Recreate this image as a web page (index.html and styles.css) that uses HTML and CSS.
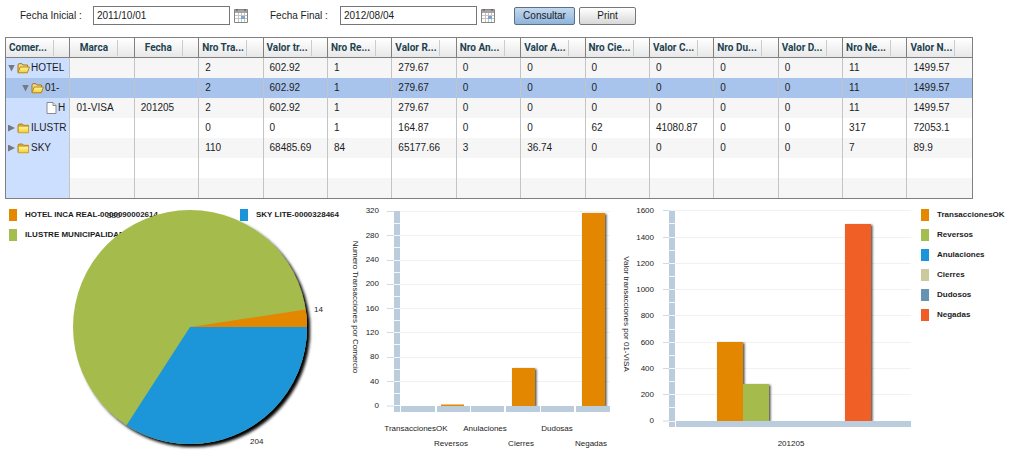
FILE: index.html
```html
<!DOCTYPE html>
<html lang="es">
<head>
<meta charset="utf-8">
<title>Transacciones por Comercio</title>
<link rel="stylesheet" href="styles.css">
</head>
<body>
<svg class="defs" width="0" height="0" aria-hidden="true">
  <defs>
    <linearGradient id="gold" x1="0" y1="0" x2="0" y2="1"><stop offset="0" stop-color="#fff6a0"/><stop offset="1" stop-color="#f2cf2e"/></linearGradient>
    <symbol id="open" viewBox="0 0 13 11"><path d="M1 9.500V1.500L2 .7H5l1 1.300h4.500v2" fill="#f3d98a" stroke="#a57618"/><path d="M1 9.800L3.200 4h9.200L10.400 9.800z" fill="url(#gold)" stroke="#b4861f"/></symbol>
    <symbol id="closed" viewBox="0 0 13 11"><path d="M1 9.500V2L2 1h3.500l1 1.300H11.500V9.500z" fill="#d9a93a" stroke="#b4861f"/><path d="M1.500 3.300h10v6.500h-10z" fill="url(#gold)" stroke="#c79a2c" stroke-width=".7"/></symbol>
    <symbol id="sheet" viewBox="0 0 11 12"><path d="M1 .5h6L10 3.500v8H1z" fill="#fff" stroke="#8b8b8b"/><path d="M7 .5v3h3" fill="#e4e4e4" stroke="#8b8b8b"/></symbol>
    <symbol id="cal" viewBox="0 0 14 15"><path d="M.5 1.500h13v13H.5z" fill="#fff" stroke="#858585"/><path d="M1 2h12v3H1z" fill="#a9a2a5"/><path d="M3 1v2M11 1v2" stroke="#555"/><path d="M1 7.500h12M1 10.500h12M4.500 5v9M7.500 5v9M10.500 5v9" stroke="#c4c4c4"/><path d="M7 8h4v3H7z" fill="#7da3d2"/></symbol>
    <filter id="pieShadow" x="-10%" y="-10%" width="125%" height="125%"><feDropShadow dx="3" dy="3" stdDeviation="1.500" flood-color="#000" flood-opacity="1"/></filter>
    <filter id="barShadow" x="-20%" y="-5%" width="150%" height="110%"><feDropShadow dx="1.500" dy="1" stdDeviation="1" flood-color="#000" flood-opacity=".7"/></filter>
  </defs>
</svg>

<form class="toolbar" onsubmit="return false">
  <label for="desde">Fecha Inicial :</label>
  <input id="desde" type="text" value="2011/10/01">
  <button class="pick" type="button" aria-label="Elegir fecha inicial"><svg width="14" height="15"><use href="#cal"/></svg></button>
  <label class="second" for="hasta">Fecha Final :</label>
  <input id="hasta" type="text" value="2012/08/04">
  <button class="pick" type="button" aria-label="Elegir fecha final"><svg width="14" height="15"><use href="#cal"/></svg></button>
  <button class="btn primary" type="submit">Consultar</button>
  <button class="btn" type="button">Print</button>
</form>

<div class="gridbox">
<table>
  <thead><tr><th><span>Comer...</span></th><th class="mid"><span>Marca</span></th><th class="mid"><span>Fecha</span></th><th><span>Nro Tra...</span></th><th><span>Valor tr...</span></th><th><span>Nro Re...</span></th><th><span>Valor R...</span></th><th><span>Nro An...</span></th><th><span>Valor A...</span></th><th><span>Nro Cie...</span></th><th><span>Valor C...</span></th><th><span>Nro Du...</span></th><th><span>Valor D...</span></th><th><span>Nro Ne...</span></th><th><span>Valor N...</span></th></tr></thead>
  <tbody>
    <tr><td><div class="node"><i class="down"></i><svg width="13" height="11"><use href="#open"/></svg>HOTEL</div></td><td></td><td></td><td>2</td><td>602.92</td><td>1</td><td>279.67</td><td>0</td><td>0</td><td>0</td><td>0</td><td>0</td><td>0</td><td>11</td><td>1499.57</td></tr>
    <tr class="selected"><td><div class="node level2"><i class="down"></i><svg width="13" height="11"><use href="#open"/></svg>01-</div></td><td></td><td></td><td>2</td><td>602.92</td><td>1</td><td>279.67</td><td>0</td><td>0</td><td>0</td><td>0</td><td>0</td><td>0</td><td>11</td><td>1499.57</td></tr>
    <tr><td><div class="node level3"><svg width="11" height="12"><use href="#sheet"/></svg>H</div></td><td>01-VISA</td><td>201205</td><td>2</td><td>602.92</td><td>1</td><td>279.67</td><td>0</td><td>0</td><td>0</td><td>0</td><td>0</td><td>0</td><td>11</td><td>1499.57</td></tr>
    <tr><td><div class="node"><i class="right"></i><svg width="13" height="11"><use href="#closed"/></svg>ILUSTR</div></td><td></td><td></td><td>0</td><td>0</td><td>1</td><td>164.87</td><td>0</td><td>0</td><td>62</td><td>41080.87</td><td>0</td><td>0</td><td>317</td><td>72053.1</td></tr>
    <tr><td><div class="node"><i class="right"></i><svg width="13" height="11"><use href="#closed"/></svg>SKY</div></td><td></td><td></td><td>110</td><td>68485.69</td><td>84</td><td>65177.66</td><td>3</td><td>36.74</td><td>0</td><td>0</td><td>0</td><td>0</td><td>7</td><td>89.9</td></tr>
    <tr><td></td><td></td><td></td><td></td><td></td><td></td><td></td><td></td><td></td><td></td><td></td><td></td><td></td><td></td><td></td></tr>
    <tr><td></td><td></td><td></td><td></td><td></td><td></td><td></td><td></td><td></td><td></td><td></td><td></td><td></td><td></td><td></td></tr>
  </tbody>
</table>
</div>

<main class="charts">
  <section class="pie">
    <ul class="legend two">
      <li><b class="c-orange"></b>HOTEL INCA REAL-0000090002614</li>
      <li><b class="c-blue"></b>SKY LITE-0000328464</li>
      <li><b class="c-green"></b>ILUSTRE MUNICIPALIDAD</li>
    </ul>
    <svg class="chart" viewBox="0 0 350 270" role="img" aria-label="Transacciones por comercio">
      <g filter="url(#pieShadow)">
        <circle cx="190" cy="127" r="117" fill="#a5bc4e"/>
        <path d="M190 127H307A117 117 0 0 1 126.500 225.300z" fill="#1b95d9"/>
        <path d="M190 127H307A117 117 0 0 0 305.700 109.600z" fill="#e48701"/>
      </g>
      <text x="107" y="18">380</text>
      <text x="314" y="112">14</text>
      <text x="250" y="244">204</text>
    </svg>
  </section>

  <svg class="chart" viewBox="350 0 262 270" role="img" aria-label="Numero Transacciones por Comercio">
    <path d="M387 11.500H610M387 35.500H610M387 60.500H610M387 84.500H610M387 108.500H610M387 132.500H610M387 157.500H610M387 181.500H610" stroke="#f1f1f1"/>
    <path d="M387 11.500h7M387 35.500h7M387 60.500h7M387 84.500h7M387 108.500h7M387 132.500h7M387 157.500h7M387 181.500h7M387 206h7" stroke="#cddbe7"/>
    <path d="M394 11h6v201h-6z" fill="#bbccdd"/>
    <path d="M394 23.500h6M394 35.500h6M394 47.500h6M394 60.500h6M394 72.500h6M394 84.500h6M394 96.500h6M394 108.500h6M394 120.500h6M394 132.500h6M394 144.500h6M394 157.500h6M394 169.500h6M394 181.500h6M394 193.500h6M394 205.500h6" stroke="#f3f7fa"/>
    <path d="M441 204.500h23v1.500h-23z" fill="#e48701"/>
    <g fill="#e48701" filter="url(#barShadow)"><path d="M512 168h23v38h-23zM582 13h23v193h-23z"/></g>
    <path d="M401 206h34v6h-34zM437 206h33v6h-33zM471 206h33v6h-33zM506 206h34v6h-34zM541 206h33v6h-33zM576 206h34v6h-34z" fill="#bbccdd"/>
    <g text-anchor="end"><text x="379" y="13">320</text><text x="379" y="38">280</text><text x="379" y="62">240</text><text x="379" y="86">200</text><text x="379" y="111">160</text><text x="379" y="135">120</text><text x="379" y="159">80</text><text x="379" y="184">40</text><text x="379" y="208">0</text></g>
    <g text-anchor="middle"><text x="416" y="231">TransaccionesOK</text><text x="451" y="246">Reversos</text><text x="485" y="231">Anulaciones</text><text x="521" y="246">Cierres</text><text x="557" y="231">Dudosas</text><text x="591" y="246">Negadas</text></g>
    <text transform="translate(353 107) rotate(90)" text-anchor="middle">Numero Transacciones por Comercio</text>
  </svg>

  <svg class="chart" viewBox="612 0 300 270" role="img" aria-label="Valor transacciones por 01-VISA">
    <path d="M663 10.500H911M663 37.500H911M663 63.500H911M663 89.500H911M663 115.500H911M663 142.500H911M663 168.500H911M663 194.500H911" stroke="#f1f1f1"/>
    <path d="M663 10.500h6M663 37.500h6M663 63.500h6M663 89.500h6M663 115.500h6M663 142.500h6M663 168.500h6M663 194.500h6M663 221h6" stroke="#cddbe7"/>
    <path d="M669 11h6v216h-6z" fill="#bbccdd"/>
    <path d="M669 23.500h6M669 37.500h6M669 50.500h6M669 63.500h6M669 76.500h6M669 89.500h6M669 102.500h6M669 115.500h6M669 129.500h6M669 142.500h6M669 155.500h6M669 168.500h6M669 181.500h6M669 194.500h6M669 207.500h6M669 221.500h6" stroke="#f3f7fa"/>
    <g filter="url(#barShadow)"><path d="M717 142h26v79h-26z" fill="#e48701"/><path d="M743 184h26v37h-26z" fill="#a5bc4e"/><path d="M845 24h26v197h-26z" fill="#f05e27"/></g>
    <path d="M676 221h235v6H676z" fill="#bbccdd"/>
    <g text-anchor="end"><text x="654" y="13">1600</text><text x="654" y="40">1400</text><text x="654" y="66">1200</text><text x="654" y="92">1000</text><text x="654" y="118">800</text><text x="654" y="145">600</text><text x="654" y="171">400</text><text x="654" y="197">200</text><text x="654" y="223">0</text></g>
    <text x="791" y="246" text-anchor="middle">201205</text>
    <text transform="translate(624 114) rotate(90)" text-anchor="middle">Valor transacciones por 01-VISA</text>
  </svg>

  <ul class="legend">
    <li><b class="c-orange"></b>TransaccionesOK</li>
    <li><b class="c-green"></b>Reversos</li>
    <li><b class="c-blue"></b>Anulaciones</li>
    <li><b class="c-sand"></b>Cierres</li>
    <li><b class="c-steel"></b>Dudosos</li>
    <li><b class="c-red"></b>Negadas</li>
  </ul>
</main>
</body>
</html>
```
FILE: styles.css
```css
* { box-sizing: border-box; }
body { margin: 0; background: #fff; color: #1c1c1c; font: 10px/12px "Liberation Sans", Arial, sans-serif; }
.defs { position: absolute; }

.toolbar { display: flex; align-items: center; padding: 6px 20px 12px; }
.toolbar label { width: 73px; white-space: nowrap; }
.toolbar .second { width: 70px; margin-left: 22px; }
.toolbar input { width: 137px; height: 19px; padding: 0 3px; border: 1px solid #767676; font: inherit; color: inherit; }
.pick { display: flex; margin: 0 0 0 4px; padding: 0; border: 0; background: none; }
.btn { width: 57px; height: 18px; margin-left: 4px; padding: 0; border: 1px solid #777; border-radius: 2px; background: linear-gradient(#fff, #d8d8d8); font: inherit; color: inherit; }
.btn.primary { width: 61px; margin-left: 19px; border-color: #5b6f86; background: linear-gradient(#c3d9ef, #8fb3dc); }

.gridbox { margin: 0 51px 0 5px; border: 1px solid #808080; }
table { width: 100%; table-layout: fixed; border-collapse: separate; border-spacing: 0; }
th { height: 20px; padding: 0; border-right: 1px solid #808080; border-bottom: 1px solid #808080; background: linear-gradient(#fff, #e8e8e8); color: #1e4250; font-family: Roboto, "Liberation Sans", sans-serif; text-align: left; }
th span { display: block; width: 48px; height: 16px; padding-left: 3px; border-right: 1px solid #ccc; line-height: 16px; white-space: nowrap; }
th.mid span { padding: 0; text-align: center; }
td { height: 20px; padding: 0 0 0 6px; border-right: 1px solid #c4c4c4; white-space: nowrap; overflow: hidden; }
th:last-child, td:last-child { border-right: 0; }
tbody tr:nth-child(odd) { background: #f6f6f6; }
td:first-child { padding: 0; background: #cddfff; }
tbody .selected, .selected td:first-child { background: #a8c4ec; }
.node { display: flex; align-items: center; padding-left: 2px; }
.node > * { flex-shrink: 0; }
.node svg { margin: 0 1px 0 2px; }
.level2 { padding-left: 16px; }
.level3 { padding-left: 38px; }
.down, .right { width: 7px; height: 7px; background: #767a80; clip-path: polygon(0 0, 100% 0, 50% 100%); }
.right { clip-path: polygon(0 0, 100% 50%, 0 100%); }

.charts { display: grid; grid-template-columns: 350fr 262fr 300fr 112fr; align-items: start; padding-top: 1px; }
.pie { display: grid; }
.pie > * { grid-area: 1 / 1; }
.chart { display: block; width: 100%; overflow: visible; }
.chart text { font-size: 8px; fill: #1c1c1c; }
.legend { display: grid; gap: 8px; align-content: start; margin: 0; padding: 9px 0 0 9px; list-style: none; font-size: 8px; font-weight: bold; }
.legend li { display: flex; align-items: center; gap: 8px; white-space: nowrap; }
.legend b { width: 8px; height: 12px; }
.two { grid-template-columns: 223px 1fr; }
.c-orange { background: #e48701; }
.c-green { background: #a5bc4e; }
.c-blue { background: #1b95d9; }
.c-sand { background: #caca9e; }
.c-steel { background: #6693b0; }
.c-red { background: #f05e27; }
```
